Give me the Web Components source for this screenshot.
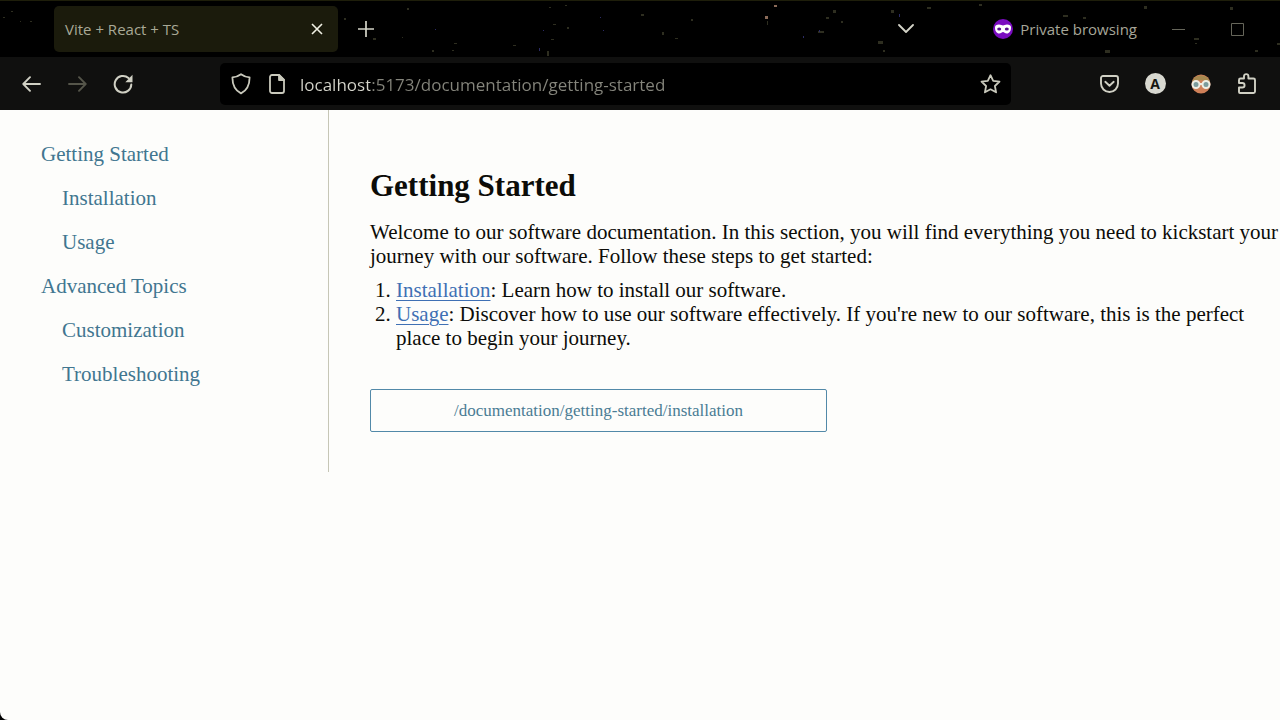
<!DOCTYPE html>
<html lang="en">
<head>
<meta charset="utf-8">
<title>Vite + React + TS</title>
<style>
  html, body { height: 100%; }
  body { margin: 0; background: #000; }
</style>
</head>
<body>
<browser-window></browser-window>
<script>
const define = (name, markup) => {
  const template = document.createElement('template');
  template.innerHTML = markup;
  customElements.define(name, class extends HTMLElement {
    constructor() {
      super();
      this.attachShadow({ mode: 'open' }).append(template.content.cloneNode(true));
    }
    connectedCallback() {
      const label = this.getAttribute('label');
      const control = this.shadowRoot.querySelector('[data-control]');
      if (control && label) control.setAttribute('aria-label', label);
      if (control && this.hasAttribute('to')) control.setAttribute('href', this.getAttribute('to'));
    }
  });
};

/* Icon button used by the tab strip and the toolbar */
define('tool-button', `
  <style>
    :host { display: flex; width: 46px; height: 40px; flex: none; }
    button { flex: 1; display: flex; align-items: center; justify-content: center;
      padding: 0; border: 0; background: none; color: inherit; font: inherit; }
  </style>
  <button type="button" data-control><slot></slot></button>`);

/* Scattered stars of the browser theme */
define('star-field', `
  <style>
    :host { display: block; position: absolute; inset: 0; overflow: hidden; pointer-events: none; }
  </style>
  <svg width="1280" height="57" fill="#2e2e20" aria-hidden="true">
    <path d="M11 10h2v1h-2zM3 16h2v1h-2zM20 20h1v1h-1zM30 20h2v1h-2zM407 7h2v2h-2zM373 37h3v2h-3zM402 36h1v1h-1zM344 17h2v2h-2zM454 42h3v1h-3zM432 49h2v2h-2zM452 49h2v1h-2zM549 6h2v1h-2zM565 4h2v1h-2zM551 38h3v1h-3zM547 50h2v5h-2zM513 44h3v1h-3zM553 23h3v1h-3zM567 26h2v2h-2zM641 13h3v2h-3zM662 31h2v3h-2zM675 37h3v1h-3zM691 18h2v2h-2zM826 16h3v2h-3zM833 9h3v3h-3zM818 30h6v2h-6zM767 20h1v4h-1zM841 20h2v2h-2zM891 9h3v3h-3zM927 6h4v2h-4zM878 40h5v3h-5zM883 49h2v2h-2zM979 3h3v2h-3zM1063 14h5v2h-5zM1083 16h3v2h-3zM1144 5h3v3h-3zM1194 37h5v2h-5zM1195 42h2v1h-2zM1230 6h3v3h-3zM1255 49h3v2h-3zM1277 42h3v2h-3zM1105 49h5v3h-5z"/>
    <path fill="#8a6a58" d="M765 15h3v3h-3zM774 4h3v2h-3z"/>
    <path fill="#2c2c66" d="M435 28h1v1h-1zM600 16h1v1h-1zM603 29h1v1h-1zM543 29h1v1h-1zM819 29h1v2h-1zM803 35h1v2h-1zM539 47h1v3h-1zM899 13h1v3h-1z"/>
  </svg>`);

define('browser-tab', `
  <style>
    :host { display: flex; align-items: center; box-sizing: border-box; width: 284px; height: 46px;
      padding-left: 11px; border-radius: 5px; background: #1b1b0c; color: #a9a996;
      font-size: 15px; line-height: 20px; position: relative; }
    span { flex: 1; }
    tool-button { width: 42px; color: #f0f0e4; }
    svg { display: block; }
  </style>
  <span><slot></slot></span>
  <tool-button label="Close tab"><svg width="12" height="12" fill="none" stroke="currentColor" stroke-width="1.6"><path d="M1 1l10 10M11 1L1 11"/></svg></tool-button>`);

define('tab-strip', `
  <style>
    :host { display: flex; align-items: center; box-sizing: border-box; height: 57px;
      padding: 0 13px 0 54px; border-top: 1px solid #1e1e0a; background: #000;
      color: #d4d4c8; position: relative; }
    .new { width: 56px; }
    .spacer { flex: 1; }
    .list { margin-right: 64px; }
    .private { display: flex; align-items: center; gap: 7px; margin-right: 12px;
      color: #a6a698; font-size: 15px; line-height: 20px; position: relative; }
    .win { width: 59px; color: #66665a; }
    svg { display: block; }
  </style>
  <star-field></star-field>
  <browser-tab>Vite + React + TS</browser-tab>
  <tool-button class="new" label="New tab"><svg width="16" height="16" fill="none" stroke="currentColor" stroke-width="1.7"><path d="M8 0v16M0 8h16"/></svg></tool-button>
  <div class="spacer"></div>
  <tool-button class="list" label="List all tabs"><svg width="16" height="10" fill="none" stroke="currentColor" stroke-width="1.8" stroke-linecap="round" stroke-linejoin="round"><path d="M1 1l7 7 7-7"/></svg></tool-button>
  <div class="private">
    <svg width="20" height="20" viewBox="0 0 20 20" aria-hidden="true"><circle cx="10" cy="10" r="10" fill="#7a0bc0"/><path fill="#fff" d="M2 8.500C2 6.300 3.700 5.500 6 5.500c1.800 0 3 .9 4 .9s2.200-.9 4-.9c2.300 0 4 .8 4 3 0 3.600-1.700 6-4.200 6-1.900 0-2.800-1.600-3.800-1.600s-1.900 1.600-3.800 1.600C3.700 14.500 2 12.100 2 8.500z"/><ellipse cx="6.200" cy="10" rx="2" ry="1.500" fill="#5a1090"/><ellipse cx="13.800" cy="10" rx="2" ry="1.500" fill="#5a1090"/></svg>
    <span>Private browsing</span>
  </div>
  <tool-button class="win" label="Minimize"><svg width="13" height="13" stroke="currentColor"><path d="M0 6.500h13"/></svg></tool-button>
  <tool-button class="win" label="Maximize"><svg width="13" height="13" fill="none" stroke="currentColor"><path d="M.5.5h12v12H.5z"/></svg></tool-button>`);

define('address-bar', `
  <style>
    :host { display: flex; align-items: center; flex: 1; min-width: 0; height: 42px;
      border-radius: 5px; background: #000; color: #c9c9bc; }
    .site { display: flex; align-items: center; }
    .site tool-button:first-child { width: 42px; }
    .site tool-button:last-child { width: 30px; }
    input { flex: 1; min-width: 0; box-sizing: border-box; height: 30px; margin: 0 0 0 8px;
      padding: 2px 0 0; border: 0; outline: 0;
      font: 17px/24px "Open Sans", "Noto Sans", sans-serif; color: transparent;
      background: linear-gradient(90deg, #d6d6cc 70px, #85857c 70px); -webkit-background-clip: text; background-clip: text; }
    .star { width: 41px; }
    svg { display: block; }
  </style>
  <div class="site">
    <tool-button label="Tracking protection"><svg width="20" height="22" fill="none" stroke="currentColor" stroke-width="1.800" stroke-linejoin="round"><path d="M10 1.200c2.500 1.900 5.300 2.900 8.600 3.200 0 7.800-2.600 12.800-8.600 16C4 17.200 1.400 12.200 1.400 4.400 4.700 4.100 7.500 3.100 10 1.200z"/></svg></tool-button>
    <tool-button label="Site information"><svg width="16" height="20" fill="none" stroke="currentColor" stroke-width="1.800" stroke-linejoin="round"><path d="M3 1h7l5 5v11a2 2 0 0 1-2 2H3a2 2 0 0 1-2-2V3a2 2 0 0 1 2-2z"/><path fill="currentColor" d="M10 1v5h5z"/></svg></tool-button>
  </div>
  <input type="text" aria-label="Address" spellcheck="false" value="localhost:5173/documentation/getting-started">
  <tool-button class="star" label="Bookmark this page"><svg width="21" height="20" fill="none" stroke="currentColor" stroke-width="1.800" stroke-linejoin="round"><path d="M10.500 1.200l2.700 5.700 6.300.8-4.600 4.300 1.200 6.300-5.600-3-5.600 3 1.200-6.300L1.500 7.700l6.300-.8z"/></svg></tool-button>`);

define('tool-bar', `
  <style>
    :host { display: flex; align-items: center; box-sizing: border-box; height: 53px;
      padding: 0 10px 0 8px; background: #10100f; color: #d0d0c4; }
    nav, .extensions { display: flex; flex: none; }
    .off { color: #55554a; }
    address-bar { margin: 0 75px 0 74px; }
    .letter { display: flex; align-items: center; justify-content: center; width: 21px; height: 21px;
      border-radius: 50%; background: #d8d8d0; color: #161610;
      font: bold 14px/21px "Open Sans", "Noto Sans", sans-serif; }
    svg { display: block; }
  </style>
  <nav aria-label="Page history">
    <tool-button label="Back"><svg width="19" height="16" fill="none" stroke="currentColor" stroke-width="1.900" stroke-linecap="round" stroke-linejoin="round"><path d="M18 8H1.500M8 1.200L1.300 8 8 14.800"/></svg></tool-button>
    <tool-button class="off" label="Forward"><svg width="19" height="16" fill="none" stroke="currentColor" stroke-width="1.900" stroke-linecap="round" stroke-linejoin="round"><path d="M1 8h16.500M11 1.200L17.700 8 11 14.800"/></svg></tool-button>
    <tool-button label="Reload"><svg width="20" height="20" fill="none" stroke="currentColor" stroke-width="2" stroke-linecap="round"><path d="M18.300 10.500A8.300 8.300 0 1 1 15.500 4"/><path fill="currentColor" stroke="none" d="M19.500.7v7.500h-7.200z"/></svg></tool-button>
  </nav>
  <address-bar></address-bar>
  <div class="extensions">
    <tool-button label="Save to Pocket"><svg width="19" height="18" fill="none" stroke="currentColor" stroke-width="1.900" stroke-linecap="round" stroke-linejoin="round"><path d="M3 1h13a2 2 0 0 1 2 2v5.500a8.500 8.500 0 0 1-17 0V3a2 2 0 0 1 2-2z"/><path d="M5.300 6.800l4.200 3.900 4.200-3.900"/></svg></tool-button>
    <tool-button label="Account"><span class="letter">A</span></tool-button>
    <tool-button label="Profile extension"><svg width="20" height="20" viewBox="0 0 20 20"><circle cx="10" cy="10" r="9.500" fill="#cf8058"/><path fill="#a88a50" d="M1 8a9.500 9.500 0 0 1 18 0C14 5.500 6 5.500 1 8z"/><g fill="#7b9c9c" stroke="#eeeee4" stroke-width="2"><circle cx="5" cy="10.500" r="3.500"/><circle cx="15" cy="10.500" r="3.500"/></g><path stroke="#eeeee4" stroke-width="2" d="M8 10h4"/></svg></tool-button>
    <tool-button label="Extensions"><svg width="20" height="21" fill="none" stroke="currentColor" stroke-width="1.900" stroke-linejoin="round"><path d="M2 19V14.500h3.300a2 2 0 0 0 0-4.500H2V7a1.500 1.500 0 0 1 1.500-1.500H7V3.300a2.200 2.200 0 0 1 4.400 0v2.200h5.100A1.500 1.500 0 0 1 18 7v11.500a1.500 1.500 0 0 1-1.500 1.500H3a1 1 0 0 1-1-1z"/></svg></tool-button>
  </div>`);

/* Sidebar entry; the nested attribute indents it one level */
define('nav-link', `
  <style>
    :host { display: block; padding: 10px 20px; }
    :host([nested]) { padding-left: 41px; }
    a { color: #417690; text-decoration: none; line-height: 24px; }
  </style>
  <a data-control><slot></slot></a>`);

define('docs-sidebar', `
  <style>
    :host { display: block; box-sizing: border-box; width: 329px; flex: none;
      padding: 22px 21px 76px; border-right: 1px solid #c6c6b6; }
  </style>
  <nav aria-label="Documentation">
    <nav-link to="#getting-started">Getting Started</nav-link>
    <nav-link nested to="#installation">Installation</nav-link>
    <nav-link nested to="#usage">Usage</nav-link>
    <nav-link to="#advanced">Advanced Topics</nav-link>
    <nav-link nested to="#customization">Customization</nav-link>
    <nav-link nested to="#troubleshooting">Troubleshooting</nav-link>
  </nav>`);

define('docs-article', `
  <style>
    :host { display: block; flex: 1; min-width: 0; padding: 58px 0 40px 41px; }
    h1 { margin: 0 0 16px; font-size: 31px; line-height: 36px; }
    p { margin: 0 0 10px; }
    ol { margin: 0 0 39px; padding-left: 26px; }
    a { color: #3f70b4; text-underline-offset: 3px; text-decoration-thickness: 1px; }
    button { display: block; box-sizing: border-box; width: 100%; max-width: 457px; height: 43px;
      padding: 0; border: 1px solid #5289a8; border-radius: 2px; background: none;
      color: #4a7c94; font: inherit; font-size: 17px; line-height: 24px; }
  </style>
  <h1>Getting Started</h1>
  <p>Welcome to our software documentation. In this section, you will find everything you need to kickstart your journey with our software. Follow these steps to get started:</p>
  <ol>
    <li><a href="#installation">Installation</a>: Learn how to install our software.</li>
    <li><a href="#usage">Usage</a>: Discover how to use our software effectively. If you're new to our software, this is the perfect place to begin your journey.</li>
  </ol>
  <button type="button">/documentation/getting-started/installation</button>`);

define('browser-window', `
  <style>
    :host { display: flex; flex-direction: column; min-height: 100%; overflow: hidden;
      font-family: "Open Sans", "Noto Sans", sans-serif; }
    main { flex: 1; display: flex; align-items: flex-start; background: #fdfdfb;
      border-bottom-left-radius: 8px; color: #0c0c08;
      font: 21px/24px "Liberation Serif", "Times New Roman", serif; }
  </style>
  <header><tab-strip></tab-strip><tool-bar></tool-bar></header>
  <main><docs-sidebar></docs-sidebar><docs-article></docs-article></main>`);
</script>
</body>
</html>
